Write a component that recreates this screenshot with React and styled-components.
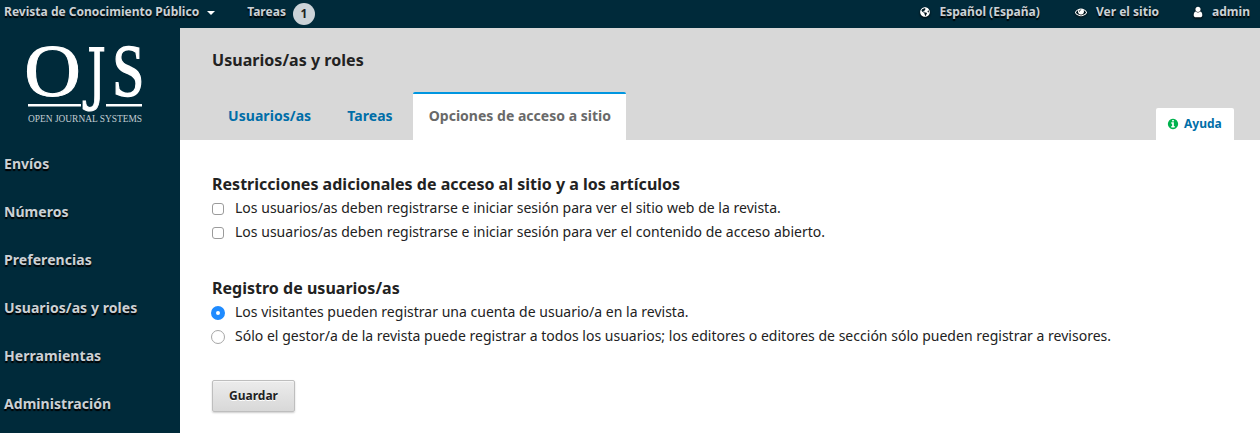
import React from "react";
import styled, { createGlobalStyle, css } from "styled-components";
import { FaGlobeAmericas } from "react-icons/fa";

const GlobalStyle = createGlobalStyle`
  * { box-sizing: border-box; }
  body {
    margin: 0;
    background: #fff;
    color: #222;
    font: 14px/24px "Noto Sans", sans-serif;
    letter-spacing: 0.015px;
    overflow: hidden;
  }
`;

const Page = styled.div`
  height: 433px;
  display: flex;
  flex-direction: column;
`;
const TopBar = styled.header`
  flex: none;
  display: flex;
  height: 28px;
  padding: 0 10px 0 4px;
  background: #002a3a;
`;
const navText = css`
  color: #ccd1d5;
  font-weight: 700;
  text-shadow: 0 2px 1px #000;
  text-decoration: none;
  white-space: nowrap;
`;
const TopLink = styled.a`
  ${navText}
  display: flex;
  align-items: center;
  height: 24px;
  font-size: 12px;
  line-height: 24px;
  margin-left: ${(p) => p.$gap || 0}px;
  svg { flex: none; color: #fff; filter: drop-shadow(0 1px 1px #000); }
`;
const Caret = styled.span`
  margin: 1px 0 0 8px;
  border: 4px solid transparent;
  border-top-color: #fff;
  border-bottom: 0;
`;
const Badge = styled.span`
  width: 22px;
  height: 22px;
  margin: 3px 0 0 7px;
  border-radius: 50%;
  background: #ccd3d8;
  color: #222;
  line-height: 21px;
  text-align: center;
  text-shadow: none;
`;
const UserNav = styled.nav`
  display: flex;
  margin-left: auto;
`;
const Label = styled.span`
  margin-left: ${(p) => p.$gap}px;
`;
const Body = styled.div`
  flex: 1;
  display: flex;
  min-height: 0;
`;
const Sidebar = styled.aside`
  flex: none;
  width: 180px;
  background: #002a3a;
`;
const Logo = styled.svg`
  display: block;
  width: 180px;
  height: 112px;
  letter-spacing: 0;
`;
const Menu = styled.nav`
  display: flex;
  flex-direction: column;
`;
const MenuLink = styled.a`
  ${navText}
  height: 48px;
  padding-left: 4px;
  line-height: 47px;
  letter-spacing: 0.06px;
`;
const Main = styled.main`
  flex: 1;
  display: flex;
  flex-direction: column;
`;
const PageHeader = styled.div`
  height: 112px;
  padding: 20px 26px 0 32px;
  background: #d8d8d8;
  display: flex;
  flex-direction: column;
  justify-content: space-between;
`;
const Title = styled.h1`
  margin: 0;
  font-size: 16px;
  line-height: 24px;
  letter-spacing: 0.04px;
`;
const TabRow = styled.div`
  display: flex;
  align-items: flex-end;
  gap: 4px;
`;
const Tab = styled.a`
  height: 48px;
  padding: 0 16px;
  line-height: 48px;
  font-weight: 700;
  letter-spacing: 0.06px;
  color: #006ea8;
  ${(p) => p.$active && css`
    width: 213px;
    color: #696969;
    background: #fff;
    border-top: 2px solid #0096e0;
    line-height: 44px;
    letter-spacing: 0.015px;
    border-radius: 2px 2px 0 0;
    white-space: nowrap;
  `}
`;
const Help = styled.a`
  display: flex;
  align-items: center;
  gap: 5px;
  width: 78px;
  height: 32px;
  margin-left: auto;
  padding-left: 11px;
  border-radius: 2px 2px 0 0;
  background: #fff;
  color: #006ea8;
  font-size: 12px;
  font-weight: 700;
  svg { color: #00b24e; }
`;
const Form = styled.form`
  padding: 32px 32px 0;
`;
const Group = styled.fieldset`
  margin: 0 0 32px;
  padding: 0;
  border: 0;
`;
const GroupTitle = styled.h2`
  margin: 0;
  font-size: 16px;
  line-height: 24px;
`;
const Option = styled.label`
  display: flex;
  align-items: center;
  height: 24px;
  line-height: 24px;
  white-space: nowrap;
`;
const Control = styled.span`
  flex: none;
  display: flex;
  align-items: center;
  justify-content: center;
  width: 12px;
  margin-right: 11px;
`;
const Check = styled.input`
  appearance: none;
  flex: none;
  width: 12px;
  height: 12px;
  margin: 2px 0 0;
  border: 1px solid #9b9b9b;
  border-radius: 3px;
  background: #fff;
`;
const Radio = styled.input`
  appearance: none;
  flex: none;
  width: 14px;
  height: 14px;
  margin: 2px 0 0;
  border: 1px solid #a6a6a6;
  border-radius: 50%;
  background: #fff;
  &:checked {
    border: 5px solid #1f8bff;
  }
`;
const Button = styled.button`
  display: block;
  width: 83px;
  height: 32px;
  padding: 0;
  border: 1px solid #bebebe;
  border-radius: 2px;
  background: linear-gradient(#ececec, #d8d8d8);
  box-shadow: inset 0 1px 0 #f6f6f6, 0 1px 2px rgba(0, 0, 0, 0.2);
  color: #222;
  font: 700 12px/30px "Noto Sans", sans-serif;
  text-shadow: 0 1px 0 #fff;
`;

const icons = {
  user: "M1536 1399q0 109-62.5 187t-150.5 78h-854q-88 0-150.5-78t-62.5-187q0-85 8.5-160.5t31.5-152 58.5-131 94-89 134.5-34.5q131 128 313 128t313-128q76 0 134.5 34.5t94 89 58.5 131 31.5 152 8.5 160.5zm-256-887q0 159-112.5 271.5t-271.5 112.5-271.5-112.5-112.5-271.5 112.5-271.5 271.5-112.5 271.5 112.5 112.5 271.5z",
  eye: "M1664 960q-152-236-381-353 61 104 61 225 0 185-131.5 316.5t-316.5 131.5-316.5-131.5-131.5-316.5q0-121 61-225-229 117-381 353 133 205 333.5 326.5t434.5 121.5 434.5-121.5 333.5-326.5zm-720-384q0-20-14-34t-34-14q-125 0-214.5 89.5t-89.5 214.5q0 20 14 34t34 14 34-14 14-34q0-86 61-147t147-61q20 0 34-14t14-34zm848 384q0 34-20 69-140 230-376.5 368.5t-499.5 138.5-499.5-139-376.5-368q-20-35-20-69t20-69q140-229 376.5-368t499.5-139 499.5 139 376.5 368q20 35 20 69z",
  info: "M1152 1376v-160q0-14-9-23t-23-9h-96v-512q0-14-9-23t-23-9h-320q-14 0-23 9t-9 23v160q0 14 9 23t23 9h96v320h-96q-14 0-23 9t-9 23v160q0 14 9 23t23 9h448q14 0 23-9t9-23zm-128-896v-160q0-14-9-23t-23-9h-192q-14 0-23 9t-9 23v160q0 14 9 23t23 9h192q14 0 23-9t9-23zm640 416q0 209-103 385.5t-279.5 279.5-385.5 103-385.5-103-279.5-279.5-103-385.5 103-385.5 279.5-279.5 385.5-103 385.5 103 279.5 279.5 103 385.5z",
};

const Icon = ({ name, size = 12 }) => (
  <svg width={size} height={size} viewBox="0 0 1792 1792" fill="currentColor" aria-hidden="true">
    <path d={icons[name]} />
  </svg>
);

const menu = ["Envíos", "Números", "Preferencias", "Usuarios/as y roles", "Herramientas", "Administración"];

const Brand = () => (
  <Logo viewBox="0 0 180 112" fill="#fff" fontFamily="'Liberation Serif', serif">
    <g stroke="#fff">
      <text transform="translate(24.2 68) scale(1.06 1)" fontSize="74" strokeWidth="1">O</text>
      <text transform="translate(112.2 68) scale(0.78 1)" fontSize="74" strokeWidth="1.4">S</text>
      <text transform="translate(87 69) scale(0.7 1)" fontSize="68" fontFamily="'DejaVu Serif', serif" strokeWidth="1">J</text>
    </g>
    <rect x="28" y="76" width="53" height="2.5" />
    <rect x="106" y="76" width="36" height="2.5" />
    <text x="28" y="93.5" fontSize="9.5" textLength="114" lengthAdjust="spacingAndGlyphs" fill="#c3cdd3">
      OPEN JOURNAL SYSTEMS
    </text>
  </Logo>
);

export default function App() {
  return (
    <Page>
      <GlobalStyle />
      <TopBar>
        <TopLink>Revista de Conocimiento Público<Caret /></TopLink>
        <TopLink $gap={32}>Tareas<Badge>1</Badge></TopLink>
        <UserNav>
          <TopLink><FaGlobeAmericas size={10} /><Label $gap={9}>Español (España)</Label></TopLink>
          <TopLink $gap={35}><Icon name="eye" size={12} /><Label $gap={9}>Ver el sitio</Label></TopLink>
          <TopLink $gap={33}><Icon name="user" /><Label $gap={8}>admin</Label></TopLink>
        </UserNav>
      </TopBar>
      <Body>
        <Sidebar>
          <Brand />
          <Menu>{menu.map((m) => <MenuLink key={m}>{m}</MenuLink>)}</Menu>
        </Sidebar>
        <Main>
          <PageHeader>
            <Title>Usuarios/as y roles</Title>
            <TabRow>
              <Tab>Usuarios/as</Tab>
              <Tab>Tareas</Tab>
              <Tab $active>Opciones de acceso a sitio</Tab>
              <Help><Icon name="info" size={12} />Ayuda</Help>
            </TabRow>
          </PageHeader>
          <Form>
            <Group>
              <GroupTitle>Restricciones adicionales de acceso al sitio y a los artículos</GroupTitle>
              <Option><Control><Check type="checkbox" /></Control>Los usuarios/as deben registrarse e iniciar sesión para ver el sitio web de la revista.</Option>
              <Option><Control><Check type="checkbox" /></Control>Los usuarios/as deben registrarse e iniciar sesión para ver el contenido de acceso abierto.</Option>
            </Group>
            <Group>
              <GroupTitle>Registro de usuarios/as</GroupTitle>
              <Option><Control><Radio type="radio" name="reg" defaultChecked /></Control>Los visitantes pueden registrar una cuenta de usuario/a en la revista.</Option>
              <Option><Control><Radio type="radio" name="reg" /></Control>Sólo el gestor/a de la revista puede registrar a todos los usuarios; los editores o editores de sección sólo pueden registrar a revisores.</Option>
            </Group>
            <Button type="button">Guardar</Button>
          </Form>
        </Main>
      </Body>
    </Page>
  );
}
